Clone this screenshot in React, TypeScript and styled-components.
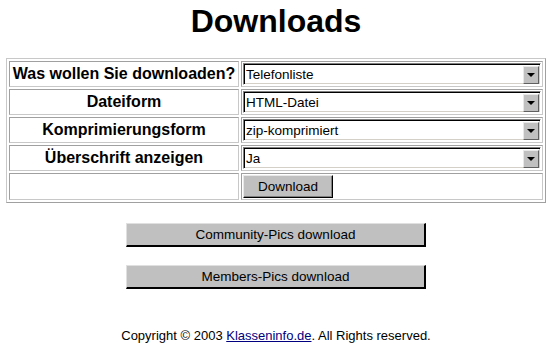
import React from "react";
import styled, { createGlobalStyle } from "styled-components";

const Global = createGlobalStyle`
  html, body { margin: 0; padding: 0; background: #fff; }
  body { font-family: "Liberation Sans", Arial, sans-serif; color: #000; }
`;

const Page = styled.div`
  width: 552px;
  display: flex;
  flex-direction: column;
  align-items: center;
`;

const Title = styled.h1`
  margin: 1px 0 0 0;
  font-size: 32px;
  line-height: 40px;
  font-weight: bold;
`;

const Table = styled.table`
  margin-top: 17px;
  width: 540px;
  border: 1px solid;
  border-color: #c8c8c8 #a0a0a0 #a0a0a0 #c8c8c8;
  border-spacing: 2px;
`;

const Row = styled.tr`
  height: 26px;
`;

const LabelCell = styled.td`
  width: 226px;
  border: 1px solid;
  border-color: #a0a0a0 #c8c8c8 #c8c8c8 #a0a0a0;
  padding: 1px;
  font-size: 16px;
  font-weight: bold;
  text-align: center;
  white-space: nowrap;
`;

const ValueCell = styled.td`
  border: 1px solid;
  border-color: #a0a0a0 #c8c8c8 #c8c8c8 #a0a0a0;
  padding: 1px;
`;

const SelectBox = styled.div`
  height: 22px;
  box-sizing: border-box;
  display: flex;
  align-items: center;
  border: 1px solid;
  border-color: #808080 #ffffff #ffffff #808080;
  box-shadow: inset 1px 1px 0 #000, inset -1px -1px 0 #d4d0c8;
  background: #fff;
  font-size: 13.5px;
  padding-left: 2px;
`;

const SelectText = styled.span`
  flex: 1;
`;

const Arrow = styled.span`
  width: 16px;
  height: 18px;
  margin-right: 1px;
  margin-top: 1px;
  box-sizing: border-box;
  background: #c0c0c0;
  border: 1px solid;
  border-color: #e8e8e8 #606060 #606060 #e8e8e8;
  display: flex;
  align-items: center;
  justify-content: center;
`;

const Tri = styled.span`
  width: 0;
  height: 0;
  border-left: 4px solid transparent;
  border-right: 4px solid transparent;
  border-top: 4px solid #000;
`;

const SmallButton = styled.div`
  width: 90px;
  height: 23px;
  box-sizing: border-box;
  background: #c0c0c0;
  border: 1px solid;
  border-color: #e8e8e8 #000 #000 #e8e8e8;
  box-shadow: inset -1px -1px 0 #808080;
  font-size: 13.5px;
  display: flex;
  align-items: center;
  justify-content: center;
`;

const BigButton = styled.div<{ $top: number }>`
  margin-top: ${(p) => p.$top}px;
  width: 300px;
  height: 24px;
  box-sizing: border-box;
  background: #c0c0c0;
  border: 1px solid;
  border-color: #e0e0e0 #000 #000 #e0e0e0;
  border-right-width: 2px;
  border-bottom-width: 2px;
  font-size: 13.5px;
  display: flex;
  align-items: center;
  justify-content: center;
`;

const Footer = styled.div`
  margin-top: 39px;
  font-size: 13px;
`;

const Link = styled.a`
  color: #000080;
  text-decoration: underline;
`;

const rows: [string, string][] = [
  ["Was wollen Sie downloaden?", "Telefonliste"],
  ["Dateiform", "HTML-Datei"],
  ["Komprimierungsform", "zip-komprimiert"],
  ["Überschrift anzeigen", "Ja"],
];

export default function App() {
  return (
    <Page>
      <Global />
      <Title>Downloads</Title>
      <Table>
        <tbody>
          {rows.map(([l, v]) => (
            <Row key={l}>
              <LabelCell>{l}</LabelCell>
              <ValueCell>
                <SelectBox>
                  <SelectText>{v}</SelectText>
                  <Arrow>
                    <Tri />
                  </Arrow>
                </SelectBox>
              </ValueCell>
            </Row>
          ))}
          <Row>
            <LabelCell></LabelCell>
            <ValueCell>
              <SmallButton>Download</SmallButton>
            </ValueCell>
          </Row>
        </tbody>
      </Table>
      <BigButton $top={20}>Community-Pics download</BigButton>
      <BigButton $top={18}>Members-Pics download</BigButton>
      <Footer>
        Copyright © 2003 <Link href="#">Klasseninfo.de</Link>. All Rights reserved.
      </Footer>
    </Page>
  );
}
